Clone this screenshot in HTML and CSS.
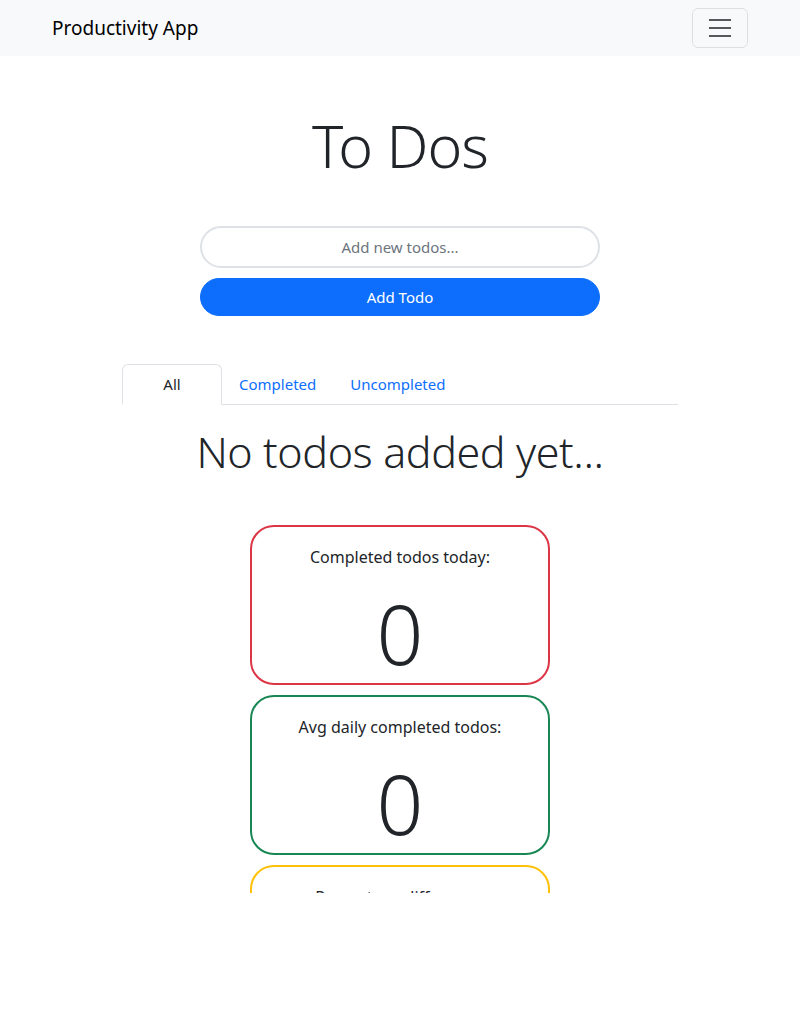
FILE: index.html
```html
<!DOCTYPE html>
<html lang="en">
<head>
<meta charset="utf-8">
<title>Productivity App</title>
<link rel="stylesheet" href="styles.css">
</head>
<body>
<div class="page">
  <nav class="navbar">
    <div class="nav-inner">
      <a class="brand" href="#">Productivity App</a>
      <button class="toggler" type="button" aria-label="Toggle navigation">
        <svg width="30" height="30" viewBox="0 0 30 30" aria-hidden="true">
          <path d="M4 7h22M4 15h22M4 23h22" stroke="#55595c" stroke-width="2" stroke-linecap="butt" fill="none"/>
        </svg>
      </button>
    </div>
  </nav>
  <main class="main">
    <h1 class="title">To Dos</h1>
    <form class="add-form">
      <input class="todo-input" type="text" placeholder="Add new todos...">
      <button class="add-btn" type="button">Add Todo</button>
    </form>
    <ul class="tabs">
      <li><a class="tab active" href="#">All</a></li>
      <li><a class="tab" href="#">Completed</a></li>
      <li><a class="tab" href="#">Uncompleted</a></li>
    </ul>
    <p class="empty">No todos added yet...</p>
    <section class="stats">
      <div class="card card-red">
        <div class="card-label">Completed todos today:</div>
        <div class="card-num">0</div>
      </div>
      <div class="card card-green">
        <div class="card-label">Avg daily completed todos:</div>
        <div class="card-num">0</div>
      </div>
      <div class="card card-yellow">
        <div class="card-label">Percentage difference:</div>
        <div class="card-num">0%</div>
      </div>
    </section>
  </main>
</div>
</body>
</html>
```
FILE: styles.css
```css
* { box-sizing: border-box; }
html, body { margin: 0; padding: 0; background: #fff; }
body {
  font-family: "Noto Sans", "Open Sans", sans-serif;
  font-size: 16px;
  line-height: 1.5;
  color: #212529;
}
.page { height: 893px; overflow: hidden; }
.navbar { background: #f8f9fa; height: 56px; }
.nav-inner {
  width: 720px; margin: 0 auto; padding: 0 12px; height: 56px;
  display: flex; align-items: center; justify-content: space-between;
}
.brand { font-size: 19px; color: #000; text-decoration: none; }
.toggler {
  width: 56px; height: 40px; margin-top: -1px;
  background: transparent; border: 1px solid rgba(0,0,0,.1); border-radius: 6px;
  display: flex; align-items: center; justify-content: center; padding: 0;
}
.main { display: flex; flex-direction: column; align-items: center; }
.title {
  margin: 52px 0 0; font-size: 59px; font-weight: 300; line-height: 74px; letter-spacing: -1px;
}
.add-form { margin-top: 44px; width: 400px; display: flex; flex-direction: column; gap: 10px; }
.todo-input {
  height: 42px; border: 2px solid #dee2e6; border-radius: 21px; text-align: center;
  font: inherit; font-size: 15px; color: #212529; outline: none;
}
.todo-input::placeholder { color: #6c757d; }
.add-btn {
  height: 38px; background: #0d6efd; border: 1px solid #0d6efd; border-radius: 19px;
  color: #fff; font: inherit; font-size: 15px;
}
.tabs {
  list-style: none; margin: 48px 0 0; padding: 0; width: 556px;
  display: flex; border-bottom: 1px solid #dee2e6;
}
.tab {
  display: block; padding: 8px 16px; margin-bottom: -1px; font-size: 15px;
  color: #0d6efd; text-decoration: none; border: 1px solid transparent;
  border-top-left-radius: 6px; border-top-right-radius: 6px;
}
.tab.active {
  width: 100px; text-align: center; color: #212529; background: #fff;
  border-color: #dee2e6 #dee2e6 #fff;
}
.empty { margin: 20px 0 0; font-size: 43px; font-weight: 300; line-height: 54px; letter-spacing: -0.4px; }
.stats { margin-top: 46px; display: flex; flex-direction: column; gap: 10px; }
.card {
  width: 300px; height: 160px; border: 2px solid; border-radius: 24px;
  display: flex; flex-direction: column; align-items: center; padding-top: 18px;
}
.card-red { border-color: #dc3545; }
.card-green { border-color: #198754; }
.card-yellow { border-color: #ffc107; }
.card-label { font-size: 16px; line-height: 24px; }
.card-num { font-size: 82px; font-weight: 300; line-height: 100px; margin-top: 14px; }
```
